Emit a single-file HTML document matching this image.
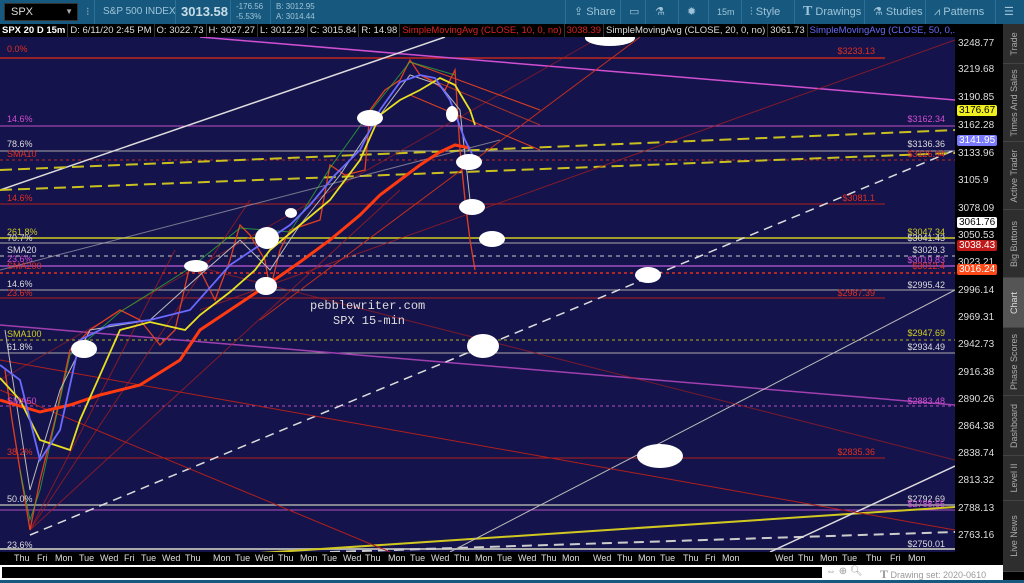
<!DOCTYPE html>
<html><head><meta charset="utf-8"><style>
*{margin:0;padding:0;box-sizing:border-box}
body{width:1024px;height:583px;overflow:hidden;background:#000;font-family:"Liberation Sans",sans-serif;position:relative}
.top{position:absolute;left:0;top:0;width:1024px;height:24px;background:#17597e;color:#9fc3d8;font-size:11px}
.top div{position:absolute;top:0;height:24px;line-height:24px}
.sep{border-left:1px solid #2a7099}
.info{position:absolute;left:0;top:24px;width:955px;height:13px;background:#000;font-size:9.5px;line-height:13px;color:#ddd;white-space:nowrap;overflow:hidden}
.info span{display:inline-block;padding:0 2px;border-right:1px solid #333}
.side{position:absolute;left:1003px;top:24px;width:21px;height:548px;background:#2e2e2e}
.side div{position:absolute;left:0;width:21px;border-bottom:1px solid #444;color:#aaa;font-size:9px}
.side div span{position:absolute;left:50%;top:50%;transform:translate(-50%,-50%) rotate(-90deg);white-space:nowrap}
.axis{position:absolute;left:955px;top:37px;width:48px;height:515px;background:#000;color:#ddd;font-size:10px}
.axis div{position:absolute;left:3px}
.tag{padding:0 2px;border-radius:2px;color:#000;font-size:10px;line-height:11px}
.bot{position:absolute;left:0;top:552px;width:955px;height:13px;background:#000;color:#ddd;font-size:9px}
.bot span{position:absolute;top:1px}
</style></head><body>
<div class="top">
 <div style="left:4px;top:3px;height:18px;width:74px;background:#000;border:1px solid #333;color:#ddd;line-height:16px;padding-left:6px">SPX<span style="position:absolute;right:4px;top:0;color:#aaa;font-size:8px">▼</span></div>
 <div style="left:86px;color:#9ab">⁝</div>
 <div class="sep" style="left:94px;padding-left:8px;font-size:10px">S&amp;P 500 INDEX</div>
 <div class="sep" style="left:175px;padding-left:5px;font-size:13px;font-weight:bold;color:#c8dce8">3013.58</div>
 <div class="sep" style="left:230px;padding-left:5px;font-size:8px;line-height:10px;padding-top:2px">-176.56<br>-5.53%</div>
 <div class="sep" style="left:270px;padding-left:5px;font-size:8px;line-height:10px;padding-top:2px">B: 3012.95<br>A: 3014.44</div>
 <div class="sep" style="left:565px;padding-left:8px">⇪ Share</div>
 <div class="sep" style="left:620px;padding-left:8px">▭</div>
 <div class="sep" style="left:645px;padding-left:9px">⚗</div>
 <div class="sep" style="left:678px;padding-left:8px">✹</div>
 <div class="sep" style="left:708px;padding-left:8px;font-size:9px">15m</div>
 <div class="sep" style="left:741px;padding-left:8px">⫶ Style</div>
 <div class="sep" style="left:794px;padding-left:8px"><b style="font-family:'Liberation Serif';font-size:14px">T</b> Drawings</div>
 <div class="sep" style="left:864px;padding-left:8px">⚗ Studies</div>
 <div class="sep" style="left:925px;padding-left:8px">⩘ Patterns</div>
 <div class="sep" style="left:995px;padding-left:8px">☰</div>
</div>
<div class="info"><span style="font-weight:bold;color:#fff">SPX 20 D 15m</span><span>D: 6/11/20 2:45 PM</span><span>O: 3022.73</span><span>H: 3027.27</span><span>L: 3012.29</span><span>C: 3015.84</span><span>R: 14.98</span><span style="color:#d22">SimpleMovingAvg (CLOSE, 10, 0, no)</span><span style="color:#d22">3038.39</span><span>SimpleMovingAvg (CLOSE, 20, 0, no)</span><span>3061.73</span><span style="color:#6a6aff;border:none">SimpleMovingAvg (CLOSE, 50, 0,...</span></div>
<div style="position:absolute;left:955px;top:24px;width:48px;height:13px;background:#000"></div>
<svg style="position:absolute;left:0;top:37px" width="955" height="515" viewBox="0 37 955 515">
<rect x="0" y="37" width="955" height="515" fill="#15134c"/>
<g fill="none" stroke-width="1">
<line x1="0" y1="58" x2="885" y2="58" stroke="#c0281c" stroke-width="1.5"/>
<line x1="0" y1="126" x2="955" y2="126" stroke="#c050c0"/>
<line x1="0" y1="151" x2="955" y2="151" stroke="#aaa"/>
<line x1="0" y1="160" x2="955" y2="160" stroke="#c0281c" stroke-dasharray="3,3"/>
<line x1="0" y1="204" x2="885" y2="204" stroke="#b0201c"/>
<line x1="0" y1="238" x2="955" y2="238" stroke="#d0d020" stroke-width="1.5"/>
<line x1="0" y1="243" x2="955" y2="243" stroke="#aaa"/>
<line x1="0" y1="256" x2="955" y2="256" stroke="#ccc" stroke-dasharray="4,4"/>
<line x1="0" y1="266" x2="955" y2="266" stroke="#a050c0" stroke-width="1.5"/>
<line x1="0" y1="273" x2="955" y2="273" stroke="#e03020" stroke-dasharray="3,3" stroke-width="1.5"/>
<line x1="0" y1="290" x2="955" y2="290" stroke="#aaa"/>
<line x1="0" y1="298" x2="885" y2="298" stroke="#b0201c"/>
<line x1="0" y1="340" x2="955" y2="340" stroke="#b0b020" stroke-dasharray="3,3"/>
<line x1="0" y1="353" x2="955" y2="353" stroke="#aaa"/>
<line x1="0" y1="406" x2="955" y2="406" stroke="#b050c0" stroke-dasharray="3,3"/>
<line x1="0" y1="458" x2="885" y2="458" stroke="#b0201c"/>
<line x1="0" y1="505" x2="955" y2="505" stroke="#aaa" stroke-width="1.5"/>
<line x1="0" y1="510" x2="955" y2="510" stroke="#b050c0"/>
<line x1="0" y1="549" x2="955" y2="549" stroke="#aaa" stroke-width="2"/>
<line x1="200" y1="37" x2="955" y2="100" stroke="#d050d0" stroke-width="1.5"/>
<line x1="0" y1="325" x2="955" y2="405" stroke="#a040b0" stroke-width="1.5"/>
<line x1="0" y1="190" x2="445" y2="37" stroke="#ddd" stroke-width="1.5"/>
<line x1="30" y1="535" x2="955" y2="150" stroke="#ddd" stroke-width="1.5" stroke-dasharray="9,6"/>
<line x1="0" y1="170" x2="955" y2="130" stroke="#c8c020" stroke-width="2" stroke-dasharray="12,6"/>
<line x1="0" y1="190" x2="955" y2="153" stroke="#c8c020" stroke-width="2" stroke-dasharray="12,6"/>
<line x1="230" y1="555" x2="955" y2="507" stroke="#d0c820" stroke-width="2"/>
<line x1="330" y1="552" x2="955" y2="532" stroke="#ccc" stroke-width="2" stroke-dasharray="10,6"/>
<line x1="450" y1="552" x2="955" y2="290" stroke="#bbb"/>
<line x1="770" y1="552" x2="955" y2="466" stroke="#ddd" stroke-width="1.5"/>
<line x1="0" y1="360" x2="955" y2="530" stroke="#b0201c"/>
<line x1="0" y1="390" x2="390" y2="552" stroke="#b0201c"/>
<line x1="190" y1="265" x2="955" y2="460" stroke="#b0201c" stroke-opacity=".6"/>
<line x1="0" y1="380" x2="600" y2="37" stroke="#b0201c" stroke-opacity=".6"/>
<line x1="30" y1="530" x2="400" y2="190" stroke="#b0201c" stroke-opacity=".7"/>
<line x1="30" y1="530" x2="250" y2="200" stroke="#b0201c" stroke-opacity=".7"/>
<line x1="30" y1="530" x2="175" y2="250" stroke="#b0201c" stroke-opacity=".7"/>
<line x1="200" y1="310" x2="955" y2="40" stroke="#b0201c" stroke-opacity=".7"/>
<line x1="260" y1="320" x2="640" y2="37" stroke="#c0301c"/>
<line x1="0" y1="270" x2="500" y2="140" stroke="#bbb" stroke-opacity=".6"/>
<line x1="410" y1="62" x2="540" y2="110" stroke="#e04020"/>
<line x1="410" y1="95" x2="540" y2="150" stroke="#e04020"/>
<line x1="420" y1="75" x2="540" y2="125" stroke="#e04020" stroke-opacity=".7"/>
<polyline stroke="#e04020" stroke-width="1.3" points="5,370 12,420 20,470 30,530 40,480 55,420 70,350 90,330 120,310 140,320 160,345 175,330 190,265 200,270 215,300 230,260 240,225 250,235 265,260 270,290 280,250 290,230 320,220 330,165 345,175 365,170 370,110 385,90 400,80 410,60 420,75 430,80 445,90 455,70 460,150 465,200 470,240 475,270"/>
<polyline stroke="#30c030" stroke-width="1" stroke-opacity=".7" points="20,470 30,520 40,490 70,355 120,312 190,268 240,228 290,232 330,168 370,112 410,62 455,75"/>
<polyline stroke="#bbb" stroke-width="1" points="5,330 30,490 60,390 90,330 150,320 200,275 240,240 270,270 300,225 340,175 380,115 410,75 440,85 460,110 470,200"/>
<polyline stroke="#ff3a10" stroke-width="3" points="0,400 40,412 70,405 100,395 140,385 180,360 200,330 230,310 260,290 300,262 330,240 360,215 380,195 400,180 420,165 440,152 455,145 470,148"/>
<polyline stroke="#e8e020" stroke-width="1.8" points="0,378 20,400 40,440 70,450 80,420 120,330 150,322 185,330 200,315 230,292 255,270 270,250 300,225 330,200 360,160 380,115 400,100 420,90 440,78 455,85 470,110 475,125"/>
<polyline stroke="#6a6aff" stroke-width="1.8" points="0,365 20,380 40,460 60,430 80,340 110,325 150,320 190,310 230,265 260,245 290,225 310,205 335,175 360,150 380,110 400,82 420,75 435,78 450,100 465,140 475,160"/>
</g>
<g fill="#fff">
<ellipse cx="370" cy="118" rx="13" ry="8"/><ellipse cx="452" cy="114" rx="6" ry="8"/>
<ellipse cx="469" cy="162" rx="13" ry="8"/><ellipse cx="472" cy="207" rx="13" ry="8"/>
<ellipse cx="492" cy="239" rx="13" ry="8"/><ellipse cx="291" cy="213" rx="6" ry="5"/>
<ellipse cx="267" cy="238" rx="12" ry="11"/><ellipse cx="196" cy="266" rx="12" ry="6"/>
<ellipse cx="266" cy="286" rx="11" ry="9"/><ellipse cx="84" cy="349" rx="13" ry="9"/>
<ellipse cx="483" cy="346" rx="16" ry="12"/><ellipse cx="648" cy="275" rx="13" ry="8"/>
<ellipse cx="660" cy="456" rx="23" ry="12"/><ellipse cx="610" cy="38" rx="25" ry="8"/>
</g>
<g font-size="9" font-family="Liberation Sans">
<text x="7" y="52" fill="#e03020">0.0%</text>
<text x="7" y="122" fill="#d050d0">14.6%</text>
<text x="7" y="147" fill="#ddd">78.6%</text>
<text x="7" y="157" fill="#e03020">SMA10</text>
<text x="7" y="201" fill="#e03020">14.6%</text>
<text x="7" y="235" fill="#d0d020">261.8%</text>
<text x="7" y="241" fill="#ddd">70.7%</text>
<text x="7" y="253" fill="#ddd">SMA20</text>
<text x="7" y="262" fill="#d050d0">23.6%</text>
<text x="7" y="269" fill="#e03020">SMA200</text>
<text x="7" y="287" fill="#ddd">14.6%</text>
<text x="7" y="296" fill="#e03020">23.6%</text>
<text x="7" y="337" fill="#d0d020">SMA100</text>
<text x="7" y="350" fill="#ddd">61.8%</text>
<text x="7" y="404" fill="#d050d0">SMA50</text>
<text x="7" y="455" fill="#e03020">38.2%</text>
<text x="7" y="502" fill="#ddd">50.0%</text>
<text x="7" y="548" fill="#ddd">23.6%</text>
<g text-anchor="end">
<text x="875" y="54" fill="#e03020">$3233.13</text>
<text x="945" y="122" fill="#d050d0">$3162.34</text>
<text x="945" y="147" fill="#ddd">$3136.36</text>
<text x="945" y="157" fill="#e03020">$3126.94</text>
<text x="875" y="201" fill="#e03020">$3081.1</text>
<text x="945" y="235" fill="#d0d020">$3047.34</text>
<text x="945" y="241" fill="#ddd">$3041.43</text>
<text x="945" y="253" fill="#ddd">$3029.3</text>
<text x="945" y="263" fill="#d050d0">$3019.83</text>
<text x="945" y="269" fill="#e03020">$3012.4</text>
<text x="945" y="288" fill="#ddd">$2995.42</text>
<text x="875" y="296" fill="#e03020">$2987.39</text>
<text x="945" y="336" fill="#d0d020">$2947.69</text>
<text x="945" y="350" fill="#ddd">$2934.49</text>
<text x="945" y="404" fill="#d050d0">$2883.48</text>
<text x="875" y="455" fill="#e03020">$2835.36</text>
<text x="945" y="502" fill="#ddd">$2792.69</text>
<text x="945" y="507" fill="#d050d0">$2788.65</text>
<text x="945" y="547" fill="#ddd">$2750.01</text>
</g>
</g>
<text x="310" y="309" fill="#ddd" font-family="Liberation Mono" font-size="12">pebblewriter.com</text>
<text x="333" y="324" fill="#ddd" font-family="Liberation Mono" font-size="12">SPX 15-min</text>
</svg>
<div class="axis">
<div style="top:1px">3248.77</div>
<div style="top:27px">3219.68</div>
<div style="top:55px">3190.85</div>
<div class="tag" style="top:68px;background:#f0f020;left:2px">3176.67</div>
<div style="top:83px">3162.28</div>
<div class="tag" style="top:98px;background:#7a7aff;color:#fff;left:2px">3141.95</div>
<div style="top:111px">3133.96</div>
<div style="top:138px">3105.9</div>
<div style="top:166px">3078.09</div>
<div class="tag" style="top:180px;background:#fff;left:2px">3061.76</div>
<div style="top:193px">3050.53</div>
<div class="tag" style="top:203px;background:#c01818;color:#fff;left:2px">3038.43</div>
<div style="top:220px">3023.21</div>
<div class="tag" style="top:227px;background:#ff4818;color:#fff;left:2px">3016.24</div>
<div style="top:248px">2996.14</div>
<div style="top:275px">2969.31</div>
<div style="top:302px">2942.73</div>
<div style="top:330px">2916.38</div>
<div style="top:357px">2890.26</div>
<div style="top:384px">2864.38</div>
<div style="top:411px">2838.74</div>
<div style="top:438px">2813.32</div>
<div style="top:466px">2788.13</div>
<div style="top:493px">2763.16</div>
</div>
<div class="side">
<div style="top:0;height:40px"><span>Trade</span></div>
<div style="top:40px;height:78px"><span>Times And Sales</span></div>
<div style="top:118px;height:68px"><span>Active Trader</span></div>
<div style="top:186px;height:68px"><span>Big Buttons</span></div>
<div style="top:254px;height:50px;background:#555;color:#ddd"><span>Chart</span></div>
<div style="top:304px;height:68px"><span>Phase Scores</span></div>
<div style="top:372px;height:60px"><span>Dashboard</span></div>
<div style="top:432px;height:45px"><span>Level II</span></div>
<div style="top:477px;height:71px"><span>Live News</span></div>
</div>
<div class="bot">
<span style="left:14px">Thu</span><span style="left:37px">Fri</span><span style="left:55px">Mon</span><span style="left:79px">Tue</span><span style="left:100px">Wed</span><span style="left:124px">Fri</span><span style="left:141px">Tue</span><span style="left:162px">Wed</span><span style="left:185px">Thu</span><span style="left:213px">Mon</span><span style="left:235px">Tue</span><span style="left:255px">Wed</span><span style="left:278px">Thu</span><span style="left:300px">Mon</span><span style="left:322px">Tue</span><span style="left:343px">Wed</span><span style="left:365px">Thu</span><span style="left:388px">Mon</span><span style="left:410px">Tue</span><span style="left:431px">Wed</span><span style="left:454px">Thu</span><span style="left:475px">Mon</span><span style="left:497px">Tue</span><span style="left:518px">Wed</span><span style="left:541px">Thu</span><span style="left:562px">Mon</span><span style="left:593px">Wed</span><span style="left:617px">Thu</span><span style="left:638px">Mon</span><span style="left:660px">Tue</span><span style="left:683px">Thu</span><span style="left:705px">Fri</span><span style="left:722px">Mon</span>
<span style="left:775px">Wed</span><span style="left:798px">Thu</span><span style="left:820px">Mon</span><span style="left:842px">Tue</span><span style="left:866px">Thu</span><span style="left:890px">Fri</span><span style="left:908px">Mon</span>
</div>
<div style="position:absolute;left:0;top:565px;width:1003px;height:15px;background:#fff"></div>
<div style="position:absolute;left:2px;top:567px;width:820px;height:11px;background:#000"></div>
<div style="position:absolute;left:826px;top:566px;font-size:10px;color:#999">⇔ ⊕ 🔍︎</div>
<div style="position:absolute;left:880px;top:567px;font-size:9px;color:#999"><b style="font-family:'Liberation Serif';font-size:12px">T</b> Drawing set: 2020-0610</div>
<div style="position:absolute;left:0;top:580px;width:1024px;height:3px;background:#17597e"></div>
</body></html>
